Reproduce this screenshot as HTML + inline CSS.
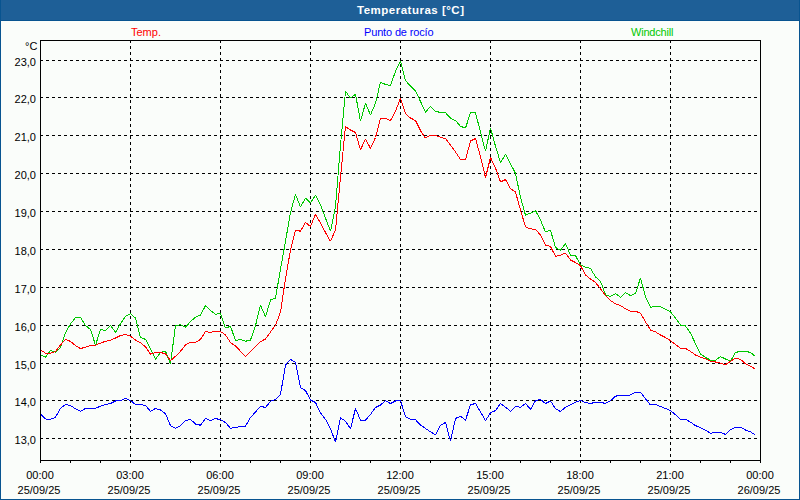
<!DOCTYPE html>
<html><head><meta charset="utf-8"><style>
html,body{margin:0;padding:0;width:800px;height:500px;overflow:hidden;background:#FAFDFA}
body{position:relative;font-family:"Liberation Sans",sans-serif;font-size:11px}
.t{position:absolute;white-space:nowrap;line-height:1}
.title{position:absolute;left:357px;top:5px;color:#fff;font-weight:bold;font-size:11.5px;line-height:1;letter-spacing:0.5px}
.yl{position:absolute;right:764px;text-align:right;color:#000;line-height:1}
.xl{position:absolute;width:80px;text-align:center;color:#000;line-height:15px}
</style></head><body>
<svg width="800" height="500" viewBox="0 0 800 500" style="position:absolute;left:0;top:0"><rect x="0" y="0" width="800" height="500" fill="#FAFDFA"/><rect x="0" y="0" width="800" height="21" fill="#1E5F97"/><rect x="0" y="20" width="800" height="1" fill="#085490"/><rect x="0" y="0" width="1" height="500" fill="#085490"/><rect x="799" y="0" width="1" height="500" fill="#085490"/><rect x="0" y="499" width="800" height="1" fill="#085490"/><g stroke="#000" stroke-width="1" stroke-linejoin="bevel" shape-rendering="crispEdges" fill="none"><line x1="40" y1="60.5" x2="760" y2="60.5" stroke-dasharray="3 3"/><line x1="40" y1="97.5" x2="760" y2="97.5" stroke-dasharray="3 3"/><line x1="40" y1="135.5" x2="760" y2="135.5" stroke-dasharray="3 3"/><line x1="40" y1="173.5" x2="760" y2="173.5" stroke-dasharray="3 3"/><line x1="40" y1="211.5" x2="760" y2="211.5" stroke-dasharray="3 3"/><line x1="40" y1="249.5" x2="760" y2="249.5" stroke-dasharray="3 3"/><line x1="40" y1="287.5" x2="760" y2="287.5" stroke-dasharray="3 3"/><line x1="40" y1="325.5" x2="760" y2="325.5" stroke-dasharray="3 3"/><line x1="40" y1="363.5" x2="760" y2="363.5" stroke-dasharray="3 3"/><line x1="40" y1="400.5" x2="760" y2="400.5" stroke-dasharray="3 3"/><line x1="40" y1="438.5" x2="760" y2="438.5" stroke-dasharray="3 3"/><line x1="130.5" y1="40" x2="130.5" y2="460" stroke-dasharray="3 3"/><line x1="220.5" y1="40" x2="220.5" y2="460" stroke-dasharray="3 3"/><line x1="310.5" y1="40" x2="310.5" y2="460" stroke-dasharray="3 3"/><line x1="400.5" y1="40" x2="400.5" y2="460" stroke-dasharray="3 3"/><line x1="490.5" y1="40" x2="490.5" y2="460" stroke-dasharray="3 3"/><line x1="580.5" y1="40" x2="580.5" y2="460" stroke-dasharray="3 3"/><line x1="670.5" y1="40" x2="670.5" y2="460" stroke-dasharray="3 3"/></g><polyline points="40.50,414.00 45.50,419.00 50.50,419.40 55.50,417.25 60.50,408.50 65.50,404.40 70.50,405.60 75.50,408.75 80.50,411.25 85.50,408.50 90.50,408.10 95.50,408.10 100.50,406.25 105.50,404.40 110.50,403.50 115.50,401.00 120.50,400.60 125.50,398.10 130.50,400.60 135.50,404.40 140.50,404.40 145.50,405.60 150.50,411.25 155.50,408.40 160.50,410.00 165.50,413.75 170.50,425.60 175.50,428.10 180.50,425.60 185.50,420.60 190.50,419.40 195.50,424.00 200.50,425.25 205.50,418.50 210.50,420.60 215.50,418.50 220.50,419.75 225.50,422.50 230.50,428.30 235.50,427.50 240.50,426.40 245.50,426.25 250.50,417.50 255.50,412.00 260.50,406.25 265.50,407.50 270.50,401.25 275.50,399.40 280.50,394.40 285.50,365.00 290.50,359.40 295.50,362.50 300.50,387.50 305.50,390.60 310.50,400.00 315.50,402.50 320.50,413.00 325.50,419.40 330.50,428.75 335.50,442.00 340.50,417.75 345.50,421.25 350.50,428.75 355.50,408.50 360.50,420.25 365.50,420.25 370.50,414.40 375.50,407.50 380.50,405.00 385.50,400.60 390.50,403.50 395.50,401.00 400.50,400.60 405.50,416.90 410.50,419.40 415.50,419.75 420.50,425.00 425.50,428.50 430.50,431.90 435.50,434.80 440.50,425.25 445.50,422.50 450.50,441.20 455.50,418.50 460.50,416.25 465.50,420.25 470.50,404.75 475.50,403.50 480.50,411.90 485.50,420.60 490.50,412.75 495.50,410.60 500.50,403.50 505.50,407.25 510.50,411.25 515.50,406.50 520.50,407.25 525.50,403.50 530.50,409.40 535.50,400.60 540.50,399.40 545.50,403.50 550.50,401.00 555.50,408.75 560.50,411.50 565.50,407.25 570.50,404.75 575.50,402.25 580.50,400.40 585.50,402.50 590.50,403.50 595.50,402.25 600.50,402.25 605.50,403.50 610.50,400.60 615.50,396.25 620.50,395.10 625.50,395.25 630.50,395.00 635.50,392.25 640.50,392.25 645.50,398.75 650.50,405.00 655.50,404.40 660.50,406.50 665.50,408.50 670.50,410.60 675.50,414.75 680.50,419.20 685.50,419.20 690.50,422.20 695.50,425.60 700.50,427.60 705.50,430.10 710.50,433.30 715.50,432.25 720.50,432.25 725.50,434.40 730.50,429.75 735.50,427.25 740.50,427.25 745.50,430.00 750.50,431.90 754.50,434.54" fill="none" stroke="#0000FF" stroke-width="1" stroke-linejoin="bevel" shape-rendering="crispEdges"/><polyline points="40.50,355.00 45.50,357.25 50.50,350.60 55.50,352.25 60.50,347.50 65.50,332.75 70.50,324.00 75.50,317.50 80.50,317.50 85.50,325.60 90.50,329.40 95.50,345.25 100.50,329.40 105.50,330.60 110.50,325.40 115.50,332.25 120.50,323.75 125.50,316.50 130.50,313.50 135.50,318.10 140.50,337.50 145.50,339.40 150.50,348.75 155.50,359.40 160.50,352.25 165.50,351.25 170.50,363.75 175.50,325.60 180.50,324.75 185.50,327.25 190.50,321.50 195.50,317.30 200.50,315.00 205.50,305.60 210.50,310.50 215.50,314.40 220.50,313.40 225.50,328.10 230.50,326.25 235.50,340.60 240.50,339.40 245.50,341.25 250.50,340.00 255.50,325.60 260.50,305.00 265.50,316.90 270.50,300.00 275.50,298.10 280.50,269.00 285.50,241.25 290.50,212.50 295.50,194.40 300.50,206.90 305.50,198.10 310.50,202.75 315.50,195.25 320.50,205.00 325.50,218.10 330.50,231.25 335.50,206.25 340.50,145.00 345.50,91.25 350.50,98.10 355.50,94.40 360.50,121.25 365.50,103.10 370.50,115.00 375.50,103.10 380.50,82.25 385.50,84.40 390.50,85.60 395.50,71.25 400.50,61.25 405.50,80.60 410.50,86.00 415.50,91.00 420.50,101.50 425.50,112.25 430.50,106.25 435.50,111.25 440.50,112.50 445.50,112.75 450.50,118.10 455.50,120.60 460.50,126.25 465.50,128.10 470.50,112.75 475.50,112.75 480.50,132.20 485.50,151.25 490.50,128.00 495.50,146.25 500.50,162.50 505.50,154.40 510.50,163.75 515.50,173.30 520.50,197.50 525.50,215.25 530.50,213.10 535.50,210.60 540.50,220.00 545.50,232.00 550.50,230.25 555.50,247.50 560.50,250.25 565.50,243.50 570.50,255.25 575.50,255.60 580.50,265.00 585.50,267.20 590.50,268.30 595.50,276.90 600.50,281.25 605.50,294.75 610.50,296.50 615.50,293.50 620.50,297.25 625.50,292.50 630.50,295.60 635.50,293.50 640.50,277.80 645.50,297.00 650.50,307.20 655.50,306.40 660.50,306.70 665.50,309.20 670.50,311.90 675.50,318.10 680.50,325.00 685.50,326.00 690.50,333.10 695.50,343.75 700.50,353.90 705.50,357.40 710.50,360.10 715.50,360.25 720.50,356.60 725.50,359.00 730.50,361.25 735.50,352.50 740.50,351.25 745.50,351.25 750.50,352.50 754.50,355.78" fill="none" stroke="#00C800" stroke-width="1" stroke-linejoin="bevel" shape-rendering="crispEdges"/><polyline points="40.50,350.00 45.50,353.10 50.50,353.10 55.50,351.50 60.50,345.00 65.50,339.40 70.50,341.40 75.50,345.60 80.50,348.50 85.50,347.25 90.50,345.25 95.50,345.25 100.50,343.10 105.50,341.25 110.50,340.25 115.50,338.00 120.50,335.50 125.50,334.40 130.50,336.25 135.50,340.00 140.50,342.70 145.50,346.90 150.50,354.10 155.50,352.50 160.50,352.50 165.50,353.75 170.50,360.60 175.50,356.25 180.50,351.25 185.50,345.00 190.50,342.25 195.50,342.25 200.50,339.40 205.50,331.60 210.50,332.40 215.50,331.40 220.50,331.40 225.50,335.00 230.50,342.60 235.50,346.00 240.50,351.25 245.50,356.25 250.50,351.25 255.50,346.60 260.50,341.60 265.50,339.00 270.50,332.00 275.50,325.25 280.50,312.00 285.50,278.50 290.50,250.00 295.50,230.00 300.50,231.25 305.50,222.50 310.50,226.50 315.50,214.40 320.50,223.10 325.50,232.50 330.50,241.25 335.50,230.00 340.50,177.00 345.50,126.50 350.50,130.00 355.50,132.50 360.50,150.00 365.50,138.75 370.50,148.50 375.50,137.50 380.50,118.10 385.50,118.10 390.50,120.60 395.50,111.25 400.50,98.10 405.50,113.75 410.50,118.00 415.50,120.60 420.50,130.60 425.50,138.10 430.50,135.00 435.50,135.30 440.50,137.20 445.50,138.60 450.50,145.00 455.50,151.90 460.50,159.40 465.50,160.00 470.50,141.00 475.50,138.50 480.50,156.90 485.50,177.50 490.50,157.50 495.50,168.10 500.50,181.90 505.50,179.60 510.50,188.75 515.50,192.00 520.50,210.00 525.50,226.90 530.50,228.90 535.50,229.20 540.50,235.25 545.50,245.00 550.50,246.50 555.50,256.25 560.50,255.25 565.50,253.10 570.50,260.00 575.50,262.50 580.50,265.60 585.50,275.00 590.50,279.00 595.50,282.50 600.50,288.75 605.50,295.60 610.50,300.60 615.50,303.75 620.50,305.60 625.50,308.75 630.50,311.25 635.50,311.25 640.50,313.10 645.50,321.90 650.50,330.00 655.50,331.90 660.50,335.00 665.50,337.50 670.50,340.60 675.50,344.60 680.50,348.30 685.50,348.50 690.50,351.40 695.50,355.00 700.50,357.20 705.50,358.90 710.50,361.25 715.50,362.00 720.50,363.10 725.50,364.75 730.50,361.25 735.50,358.10 740.50,359.40 745.50,363.75 750.50,366.25 754.50,368.61" fill="none" stroke="#FF0000" stroke-width="1" stroke-linejoin="bevel" shape-rendering="crispEdges"/><g stroke="#000" stroke-width="1" shape-rendering="crispEdges" fill="none"><rect x="40.5" y="40.5" width="720" height="420"/><line x1="40.5" y1="461" x2="40.5" y2="463"/><line x1="70.5" y1="461" x2="70.5" y2="463"/><line x1="100.5" y1="461" x2="100.5" y2="463"/><line x1="130.5" y1="461" x2="130.5" y2="463"/><line x1="160.5" y1="461" x2="160.5" y2="463"/><line x1="190.5" y1="461" x2="190.5" y2="463"/><line x1="220.5" y1="461" x2="220.5" y2="463"/><line x1="250.5" y1="461" x2="250.5" y2="463"/><line x1="280.5" y1="461" x2="280.5" y2="463"/><line x1="310.5" y1="461" x2="310.5" y2="463"/><line x1="340.5" y1="461" x2="340.5" y2="463"/><line x1="370.5" y1="461" x2="370.5" y2="463"/><line x1="400.5" y1="461" x2="400.5" y2="463"/><line x1="430.5" y1="461" x2="430.5" y2="463"/><line x1="460.5" y1="461" x2="460.5" y2="463"/><line x1="490.5" y1="461" x2="490.5" y2="463"/><line x1="520.5" y1="461" x2="520.5" y2="463"/><line x1="550.5" y1="461" x2="550.5" y2="463"/><line x1="580.5" y1="461" x2="580.5" y2="463"/><line x1="610.5" y1="461" x2="610.5" y2="463"/><line x1="640.5" y1="461" x2="640.5" y2="463"/><line x1="670.5" y1="461" x2="670.5" y2="463"/><line x1="700.5" y1="461" x2="700.5" y2="463"/><line x1="730.5" y1="461" x2="730.5" y2="463"/><line x1="760.5" y1="461" x2="760.5" y2="463"/></g></svg>
<div class="title">Temperaturas [°C]</div>
<div class="t" style="left:131px;top:27px;color:#FF0000">Temp.</div>
<div class="t" style="left:364px;top:27px;color:#0000FF;letter-spacing:-0.15px">Punto de rocío</div>
<div class="t" style="left:631px;top:27px;color:#00C800;letter-spacing:-0.2px">Windchill</div>
<div class="t" style="left:25px;top:41px;color:#000">°C</div>
<div class="yl" style="top:57px">23,0</div>
<div class="yl" style="top:94px">22,0</div>
<div class="yl" style="top:132px">21,0</div>
<div class="yl" style="top:170px">20,0</div>
<div class="yl" style="top:208px">19,0</div>
<div class="yl" style="top:246px">18,0</div>
<div class="yl" style="top:284px">17,0</div>
<div class="yl" style="top:322px">16,0</div>
<div class="yl" style="top:360px">15,0</div>
<div class="yl" style="top:397px">14,0</div>
<div class="yl" style="top:435px">13,0</div>
<div class="xl" style="left:0px;top:468px">00:00<br><span style="position:relative;left:-1px">25/09/25</span></div>
<div class="xl" style="left:90px;top:468px">03:00<br><span style="position:relative;left:-1px">25/09/25</span></div>
<div class="xl" style="left:180px;top:468px">06:00<br><span style="position:relative;left:-1px">25/09/25</span></div>
<div class="xl" style="left:270px;top:468px">09:00<br><span style="position:relative;left:-1px">25/09/25</span></div>
<div class="xl" style="left:360px;top:468px">12:00<br><span style="position:relative;left:-1px">25/09/25</span></div>
<div class="xl" style="left:450px;top:468px">15:00<br><span style="position:relative;left:-1px">25/09/25</span></div>
<div class="xl" style="left:540px;top:468px">18:00<br><span style="position:relative;left:-1px">25/09/25</span></div>
<div class="xl" style="left:630px;top:468px">21:00<br><span style="position:relative;left:-1px">25/09/25</span></div>
<div class="xl" style="left:720px;top:468px">00:00<br><span style="position:relative;left:-1px">26/09/25</span></div>
</body></html>
